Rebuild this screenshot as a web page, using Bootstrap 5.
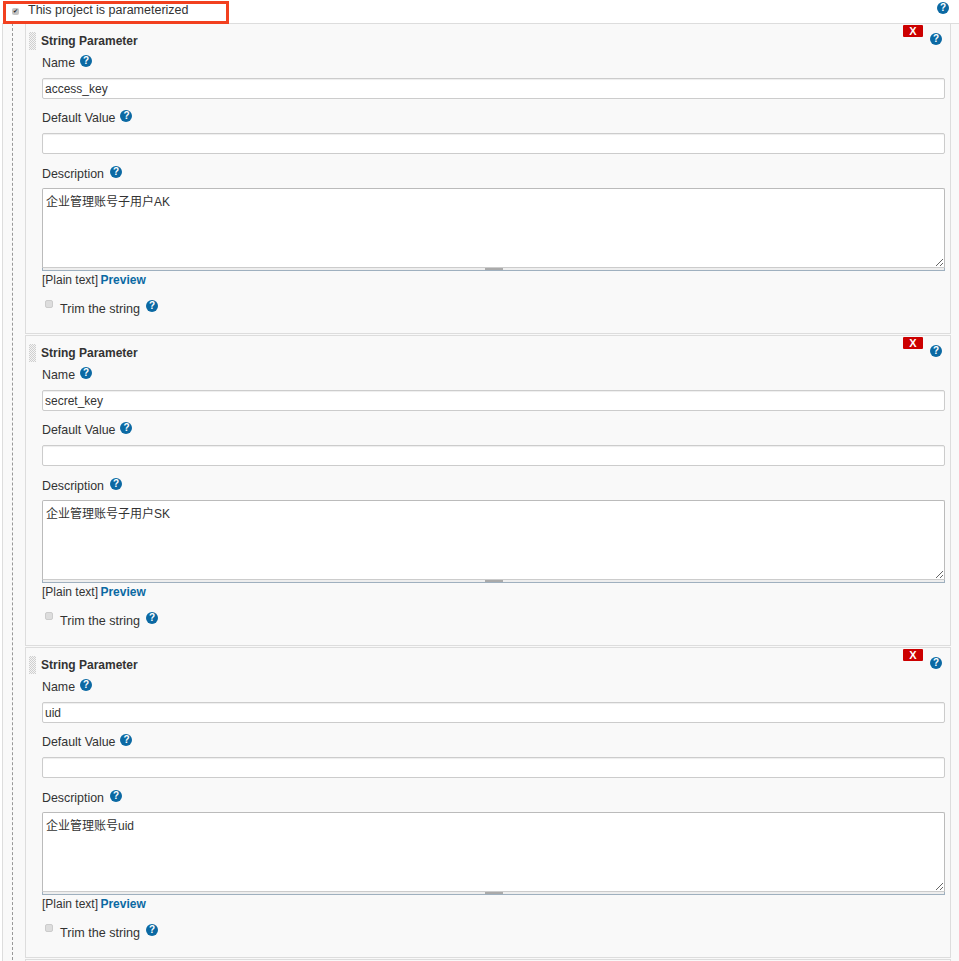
<!DOCTYPE html>
<html lang="en">
<head>
<meta charset="utf-8">
<title>Parameters</title>
<link rel="stylesheet" href="https://cdn.jsdelivr.net/npm/bootstrap@5.3.0/dist/css/bootstrap.min.css">
<style>
html,body{height:961px;overflow:hidden;background:#fff}
body{font-family:"Liberation Sans",Arial,"Noto Sans CJK SC",sans-serif;font-size:12px;color:#333;line-height:16px}
.top-row{height:23px}
.mark-box{width:226px;height:23px;margin:1px 0 0 3px;border:3px solid #f2401f;padding-left:6px;position:relative;z-index:2;background:#fff;font-size:12.5px}
.mark-box .tick{width:7px;height:7px;background:#c4c4c4;border-radius:2px;margin:4px 9px 0 0;color:#222;font-size:6px;line-height:7px;text-align:center}
.mark-box .cap{margin-top:-2px}
.help-dot{width:12px;height:12px;border-radius:50%;background:#0b69a3;color:#fff;font-size:10px;font-weight:700;line-height:12px;text-align:center;display:inline-block;flex:none}
.top-help{margin:2px 10px 0 0}
.panel-area{margin-left:2px;border-left:1px solid #ddd;border-top:1px solid #ddd;background:#f9f9f9;height:938px;padding-left:9px;overflow:hidden}
.dash-rail{border-left:1px dashed #999;padding-left:12px;height:100%;margin-top:-1px}
.param-block{width:926px;height:311px;border:1px solid #ddd;margin-bottom:1px;position:relative;padding:0 5px 0 16px}
.param-stub{height:3px;border-bottom:0}
.grip{position:absolute;left:3px;top:8px;width:7px;height:18px;background-image:repeating-conic-gradient(#cfcfcf 0 25%,#f4f4f4 0 50%);background-size:2px 2px}
.head-row{height:31px}
.head-title{font-weight:700;font-size:12px;margin:9px 0 0 -1px}
.x-btn{width:20px;height:12px;background:#cc0000;color:#fff;font-weight:700;font-size:11px;line-height:12px;text-align:center;border-radius:1px;margin-top:1px}
.head-help{margin:9px 3px 0 7px}
.field-label{height:16px;font-size:12.4px}
.field-label .help-dot{margin:-2px 0 0 5px;transform:translateY(-1px)}
.desc-label{margin-top:12px}
.desc-label .help-dot{margin-left:6px}
.form-control.field-box{height:21px;padding:0 2px;font-size:12px;line-height:16px;border:1px solid #ccc;border-radius:2px;color:#333;box-shadow:inset 0 1px 1px #eee;margin-top:7px;margin-bottom:11px}
.form-control.text-box{height:80px;min-height:80px;padding:5px 3px;font-size:12px;line-height:16px;border:1px solid #bbb;border-bottom-color:#ccc;border-radius:2px 2px 0 0;color:#333;margin-top:6px;display:block;resize:vertical}
.grab-bar{height:3px;background:#eee;border:1px solid #9fb0bf;border-width:0 1px 1px;display:flex;justify-content:center}
.grab-bar span{width:18px;height:2px;background:#aaa}
.hint-line{margin-top:1px;height:16px}
.hint-line a{color:#0b69a3;font-weight:700;text-decoration:none;margin-left:-1px}
.trim-row{margin-top:11px;padding-left:3px}
.trim-box{width:8px;height:8px;border-radius:2px;background:#ddd;border:1px solid #ccc;margin:1px 7px 0 0}
.trim-row .lbl{margin-top:2px;font-size:12.6px}
.trim-row .help-dot{margin:1px 0 0 6px}
</style>
</head>
<body>
<div class="top-row d-flex justify-content-between align-items-start">
  <div class="mark-box d-flex align-items-start"><span class="tick">✔</span><span class="cap">This project is parameterized</span></div>
  <span class="help-dot top-help">?</span>
</div>
<div class="panel-area">
  <div class="dash-rail">

    <section class="param-block">
      <div class="grip"></div>
      <div class="head-row d-flex justify-content-between align-items-start">
        <div class="head-title">String Parameter</div>
        <div class="d-flex align-items-start"><div class="x-btn">X</div><span class="help-dot head-help">?</span></div>
      </div>
      <div class="field-label d-flex align-items-center">Name<span class="help-dot">?</span></div>
      <input class="form-control field-box" value="access_key">
      <div class="field-label d-flex align-items-center">Default Value<span class="help-dot">?</span></div>
      <input class="form-control field-box" value="">
      <div class="field-label desc-label d-flex align-items-center">Description<span class="help-dot">?</span></div>
      <textarea class="form-control text-box">企业管理账号子用户AK</textarea>
      <div class="grab-bar"><span></span></div>
      <div class="hint-line">[Plain text] <a href="#">Preview</a></div>
      <div class="trim-row d-flex align-items-start"><span class="trim-box"></span><span class="lbl">Trim the string</span><span class="help-dot">?</span></div>
    </section>

    <section class="param-block">
      <div class="grip"></div>
      <div class="head-row d-flex justify-content-between align-items-start">
        <div class="head-title">String Parameter</div>
        <div class="d-flex align-items-start"><div class="x-btn">X</div><span class="help-dot head-help">?</span></div>
      </div>
      <div class="field-label d-flex align-items-center">Name<span class="help-dot">?</span></div>
      <input class="form-control field-box" value="secret_key">
      <div class="field-label d-flex align-items-center">Default Value<span class="help-dot">?</span></div>
      <input class="form-control field-box" value="">
      <div class="field-label desc-label d-flex align-items-center">Description<span class="help-dot">?</span></div>
      <textarea class="form-control text-box">企业管理账号子用户SK</textarea>
      <div class="grab-bar"><span></span></div>
      <div class="hint-line">[Plain text] <a href="#">Preview</a></div>
      <div class="trim-row d-flex align-items-start"><span class="trim-box"></span><span class="lbl">Trim the string</span><span class="help-dot">?</span></div>
    </section>

    <section class="param-block">
      <div class="grip"></div>
      <div class="head-row d-flex justify-content-between align-items-start">
        <div class="head-title">String Parameter</div>
        <div class="d-flex align-items-start"><div class="x-btn">X</div><span class="help-dot head-help">?</span></div>
      </div>
      <div class="field-label d-flex align-items-center">Name<span class="help-dot">?</span></div>
      <input class="form-control field-box" value="uid">
      <div class="field-label d-flex align-items-center">Default Value<span class="help-dot">?</span></div>
      <input class="form-control field-box" value="">
      <div class="field-label desc-label d-flex align-items-center">Description<span class="help-dot">?</span></div>
      <textarea class="form-control text-box">企业管理账号uid</textarea>
      <div class="grab-bar"><span></span></div>
      <div class="hint-line">[Plain text] <a href="#">Preview</a></div>
      <div class="trim-row d-flex align-items-start"><span class="trim-box"></span><span class="lbl">Trim the string</span><span class="help-dot">?</span></div>
    </section>

    <section class="param-block param-stub"></section>
  </div>
</div>
<script src="https://cdn.jsdelivr.net/npm/bootstrap@5.3.0/dist/js/bootstrap.bundle.min.js"></script>
</body>
</html>
